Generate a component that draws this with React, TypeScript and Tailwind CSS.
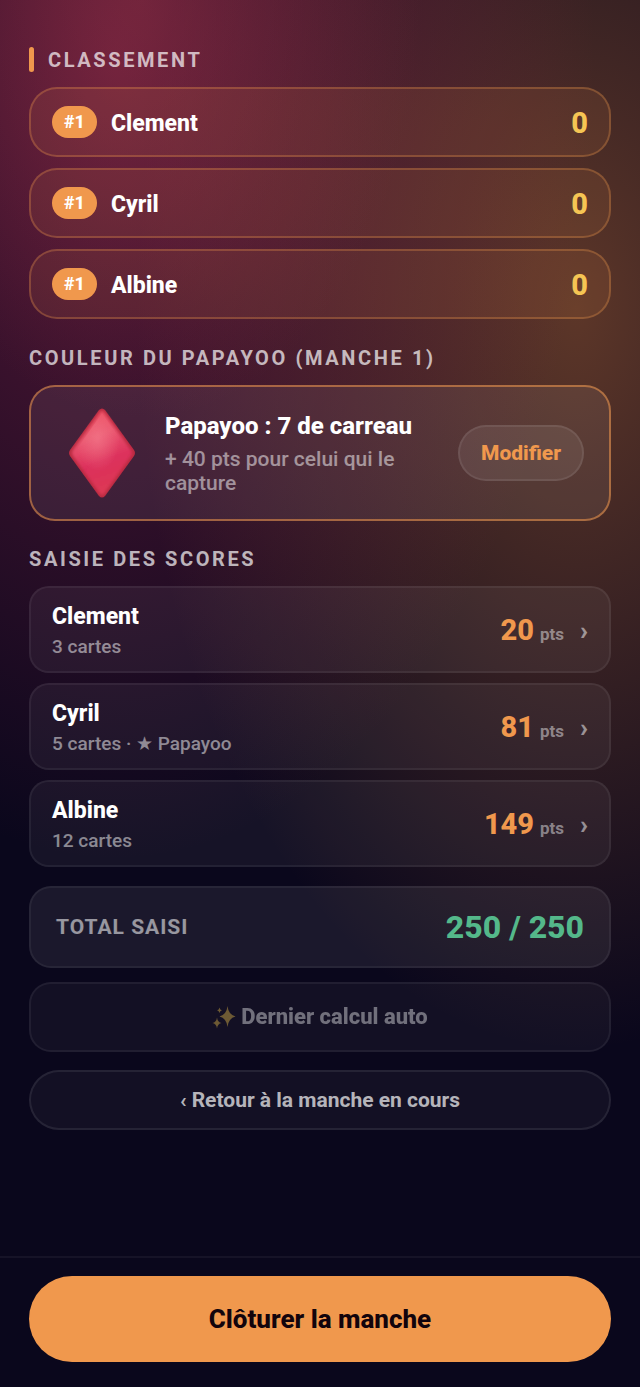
type Player = { name: string; total: number; cards: number; papayoo?: boolean; points: number };

const players: Player[] = [
  { name: "Clement", total: 0, cards: 3, points: 20 },
  { name: "Cyril", total: 0, cards: 5, papayoo: true, points: 81 },
  { name: "Albine", total: 0, cards: 12, points: 149 },
];

function Diamond() {
  return (
    <svg viewBox="0 0 68 92" className="h-[92px] w-[68px] shrink-0" aria-hidden="true">
      <defs>
        <linearGradient id="face" x1="0.35" y1="0" x2="0.6" y2="1">
          <stop offset="0" stopColor="#ee4f62" />
          <stop offset="0.3" stopColor="#e9546e" />
          <stop offset="0.62" stopColor="#dc2f5b" />
          <stop offset="1" stopColor="#dd3a54" />
        </linearGradient>
        <radialGradient id="shine" cx="0.42" cy="0.32" r="0.4">
          <stop offset="0" stopColor="#f58090" stopOpacity="0.6" />
          <stop offset="1" stopColor="#f58090" stopOpacity="0" />
        </radialGradient>
        <filter id="soft" x="-10%" y="-10%" width="120%" height="120%">
          <feGaussianBlur stdDeviation="1.8" />
        </filter>
        <filter id="edge" x="-10%" y="-10%" width="120%" height="120%">
          <feGaussianBlur stdDeviation="0.6" />
        </filter>
      </defs>
      <path
        d="M31 3Q34 0 37 3L66 43Q68 46 66 49L37 89Q34 92 31 89L2 49Q0 46 2 43Z"
        fill="#b92a40"
        filter="url(#edge)"
      />
      <path
        d="M32 5Q34 3 36 5L63 43Q65 46 63 49L36 87Q34 89 32 87L5 49Q3 46 5 43Z"
        fill="url(#face)"
        filter="url(#soft)"
      />
      <path d="M34 6L62 46L34 86L6 46Z" fill="url(#shine)" filter="url(#edge)" />
    </svg>
  );
}

function Sparkles() {
  return (
    <svg viewBox="0 0 24 24" className="h-6 w-6 shrink-0" fill="#f5c84c" aria-hidden="true">
      <path d="M15.5 1Q16.4 9.6 23.5 11.5Q16.4 13.4 15.5 22Q14.6 13.4 7.5 11.5Q14.6 9.6 15.5 1Z" />
      <path d="M5 12.5Q5.6 17.3 9.6 18Q5.6 18.7 5 23.5Q4.4 18.7 .4 18Q4.4 17.3 5 12.5Z" />
      <path d="M7.5 2.5Q7.9 4.9 9.9 5.3Q7.9 5.7 7.5 8.1Q7.1 5.7 5.1 5.3Q7.1 4.9 7.5 2.5Z" />
    </svg>
  );
}

function SectionTitle({ children }: { children: string }) {
  return (
    <h2 className="text-[20px] leading-6 font-bold tracking-[0.13em] text-white/70 uppercase">
      {children}
    </h2>
  );
}

function RankRow({ player }: { player: Player }) {
  return (
    <li className="flex items-center rounded-[28px] border-2 border-[#f0984d]/30 bg-[#f0984d]/10 px-[21px] py-[17px]">
      <span className="rounded-full bg-[#f0984d] px-3 py-1 text-[18px] leading-6 font-extrabold">#1</span>
      <span className="ml-[14px] pt-1 text-[23px] leading-7 font-extrabold">{player.name}</span>
      <span className="ml-auto pt-0.5 text-[29px] leading-[30px] font-extrabold text-[#f5c554]">
        {player.total}
      </span>
    </li>
  );
}

function ScoreRow({ player }: { player: Player }) {
  return (
    <li>
      <button
        type="button"
        className="flex w-full items-center rounded-[20px] border-2 border-white/6 bg-white/5 px-[21px] py-3 text-left"
      >
        <span className="flex flex-col">
          <span className="text-[23px] leading-[34px] font-extrabold">{player.name}</span>
          <span className="text-[19px] leading-[25px] font-medium text-white/50">
            {player.cards} cartes{player.papayoo ? " · ★ Papayoo" : ""}
          </span>
        </span>
        <span className="ml-auto flex items-baseline gap-[6px] pt-0.5">
          <span className="text-[29px] leading-8 font-extrabold text-[#f0984d]">{player.points}</span>
          <span className="text-[17px] font-bold text-white/45">pts</span>
        </span>
        <span className="ml-4 text-[26px] leading-8 font-black text-white/50">›</span>
      </button>
    </li>
  );
}

export default function App() {
  return (
    <div className="flex min-h-screen flex-col bg-[#0a071c] bg-[radial-gradient(280px_420px_at_22%_0px,rgba(190,70,75,0.28),transparent),radial-gradient(480px_800px_at_18%_60px,rgba(160,40,80,0.56),transparent),radial-gradient(440px_740px_at_90%_310px,rgba(190,110,55,0.46),transparent)] bg-no-repeat font-['Roboto',sans-serif] text-white">
      <main className="flex flex-1 flex-col px-[29px] pt-[47px]">
        <div className="flex items-center gap-[14px]">
          <span className="h-[25px] w-[5px] rounded-full bg-[#f0984d]" />
          <SectionTitle>Classement</SectionTitle>
        </div>
        <ul className="mt-[15px] flex flex-col gap-[11px]">
          {players.map((p) => (
            <RankRow key={p.name} player={p} />
          ))}
        </ul>

        <div className="mt-[27px]">
          <SectionTitle>Couleur du Papayoo (manche 1)</SectionTitle>
        </div>
        <section className="mt-[15px] flex items-center rounded-[26px] border-2 border-[#f0984d]/55 bg-white/7 py-5 pr-[25px] pl-[37px]">
          <Diamond />
          <div className="ml-[29px] min-w-0 flex-1">
            <h3 className="text-[24px] leading-7 font-extrabold">Papayoo : 7 de carreau</h3>
            <p className="mt-[7px] text-[21px] leading-6 font-medium text-white/50">
              + 40 pts pour celui qui le capture
            </p>
          </div>
          <button
            type="button"
            className="ml-6 rounded-full border-2 border-white/8 bg-white/8 px-[21px] py-[14px] text-[21px] leading-6 font-extrabold text-[#f0984d]"
          >
            Modifier
          </button>
        </section>

        <div className="mt-[26px]">
          <SectionTitle>Saisie des scores</SectionTitle>
        </div>
        <ul className="mt-[15px] flex flex-col gap-[10px]">
          {players.map((p) => (
            <ScoreRow key={p.name} player={p} />
          ))}
        </ul>

        <div className="mt-[19px] flex items-center justify-between rounded-[22px] border-2 border-white/6 bg-white/7 px-[25px] py-[19px]">
          <span className="text-[21px] leading-6 font-bold tracking-[1px] text-white/55 uppercase">
            Total saisi
          </span>
          <span className="text-[32px] leading-10 font-extrabold text-[#54b88a]">250 / 250</span>
        </div>

        <button
          type="button"
          disabled
          className="mt-[14px] flex items-center justify-center rounded-[22px] border-2 border-white/6 bg-white/4 py-[17px] text-[22px] leading-8 font-extrabold"
        >
          <span className="flex items-center gap-[5px] opacity-40">
            <Sparkles />
            Dernier calcul auto
          </span>
        </button>
        <button
          type="button"
          className="mt-[18px] rounded-full border-2 border-white/8 bg-white/4 py-[14px] text-[21px] leading-7 font-bold text-white/70"
        >
          ‹ Retour à la manche en cours
        </button>
      </main>

      <footer className="mt-10 border-t-2 border-white/5 px-[29px] pt-[18px] pb-[25px]">
        <button
          type="button"
          className="w-full rounded-full bg-[#f0984d] py-[27px] text-[26px] leading-8 font-extrabold text-[#12040c]"
        >
          Clôturer la manche
        </button>
      </footer>
    </div>
  );
}
